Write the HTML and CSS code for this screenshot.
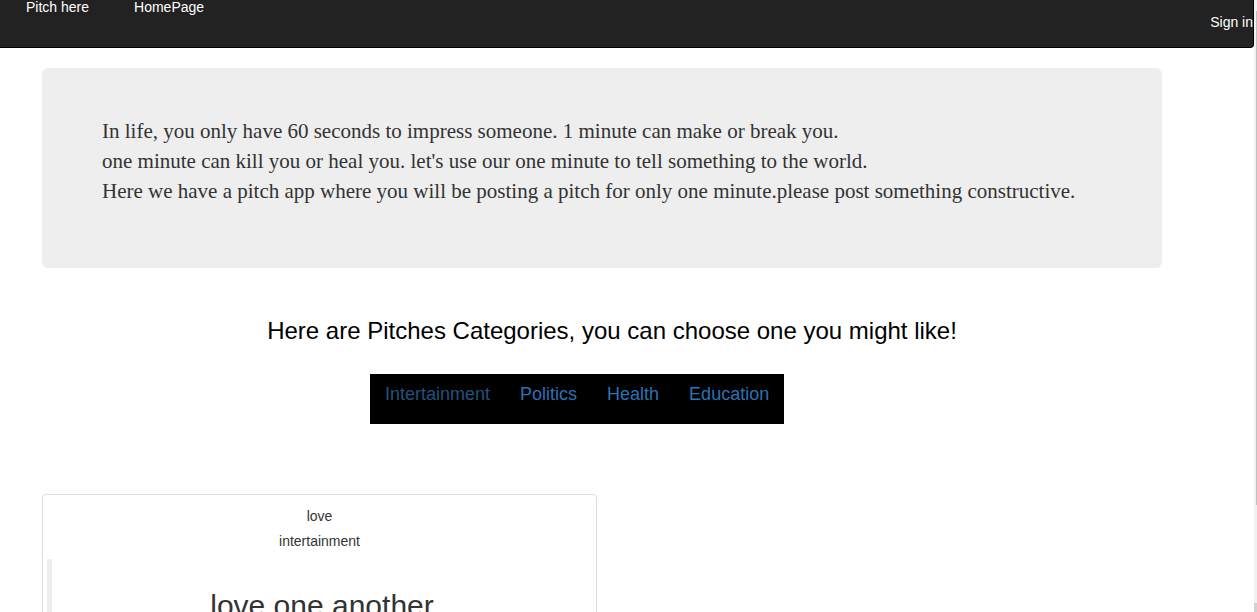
FILE: index.html
```html
<!DOCTYPE html>
<html lang="en">
<head>
<meta charset="utf-8">
<title>Pitch</title>
<link rel="stylesheet" href="styles.css">
</head>
<body>
<div class="page">
  <nav class="navbar">
    <div class="navbar-links">
      <a href="#">Pitch here</a>
      <a href="#">HomePage</a>
    </div>
    <a class="sign-in" href="#">Sign in</a>
  </nav>
  <main class="container">
    <section class="jumbotron">
      <p>In life, you only have 60 seconds to impress someone. 1 minute can make or break you.<br>
      one minute can kill you or heal you. let's use our one minute to tell something to the world.<br>
      Here we have a pitch app where you will be posting a pitch for only one minute.please post something constructive.</p>
    </section>
    <h1 class="title">Here are Pitches Categories, you can choose one you might like!</h1>
    <nav class="categories">
      <a class="current" href="#">Intertainment</a>
      <a href="#">Politics</a>
      <a href="#">Health</a>
      <a href="#">Education</a>
    </nav>
    <article class="card">
      <p>love</p>
      <p>intertainment</p>
      <blockquote>
        <h2>love one another</h2>
      </blockquote>
    </article>
  </main>
</div>
<div class="scroll-track" aria-hidden="true">
  <div class="scroll-thumb"></div>
  <div class="scroll-end"></div>
</div>
</body>
</html>
```
FILE: styles.css
```css
* {
  box-sizing: border-box;
}

body {
  display: flex;
  height: 100vh;
  margin: 0;
  overflow: hidden;
  background: #fff;
  color: #333;
  font: 14px/20px "Liberation Sans", Arial, sans-serif;
}

a {
  text-decoration: none;
}

.page {
  flex: 1;
  min-width: 0;
}

.navbar {
  display: flex;
  justify-content: space-between;
  height: 48px;
  padding-left: 26px;
  background: #222;
  border: solid #000;
  border-width: 0 1px 1px 0;
  border-radius: 0 0 4px 0;
}

.navbar a {
  color: #fff;
}

.navbar-links {
  display: flex;
  gap: 45px;
  margin-top: -3px;
}

.sign-in {
  padding-top: 12px;
}

.container {
  padding: 20px 57px 0 27px;
}

.jumbotron {
  margin: 0 35px 0 15px;
  padding: 48px 60px 62px;
  background: #eee;
  border-radius: 6px;
}

.jumbotron p {
  margin: 0;
  font: 21px/30px "Liberation Serif", "Times New Roman", serif;
}

.title {
  margin: 50px 0 0;
  color: #000;
  font-size: 24px;
  font-weight: 400;
  line-height: 26px;
  text-align: center;
}

.categories {
  display: flex;
  gap: 30px;
  width: fit-content;
  height: 50px;
  margin: 30px auto 0 343px;
  padding: 10px 15px;
  background: #000;
  font-size: 18px;
}

.categories a {
  color: #2a72b5;
}

.categories .current {
  color: #23527c;
}

.card {
  width: 555px;
  margin: 70px 0 0 15px;
  padding: 11px 4px 4px;
  border: 1px solid #ddd;
  border-radius: 4px;
  text-align: center;
}

.card p {
  margin: 0 0 5px;
}

.card blockquote {
  margin: 8px 0 20px;
  padding: 10px 20px;
  border-left: 5px solid #eee;
}

.card h2 {
  margin: 20px 0 10px;
  font-size: 30px;
  font-weight: 400;
  line-height: 33px;
}

.scroll-track {
  display: flex;
  flex-direction: column;
  align-items: flex-end;
  justify-content: space-between;
  width: 3px;
  padding-top: 11px;
  background: #f1f1f1;
}

.scroll-thumb {
  width: 1px;
  height: 494px;
  background: #c1c1c1;
}

.scroll-end {
  width: 3px;
  height: 9px;
  background: #d2d2d2;
}
```
